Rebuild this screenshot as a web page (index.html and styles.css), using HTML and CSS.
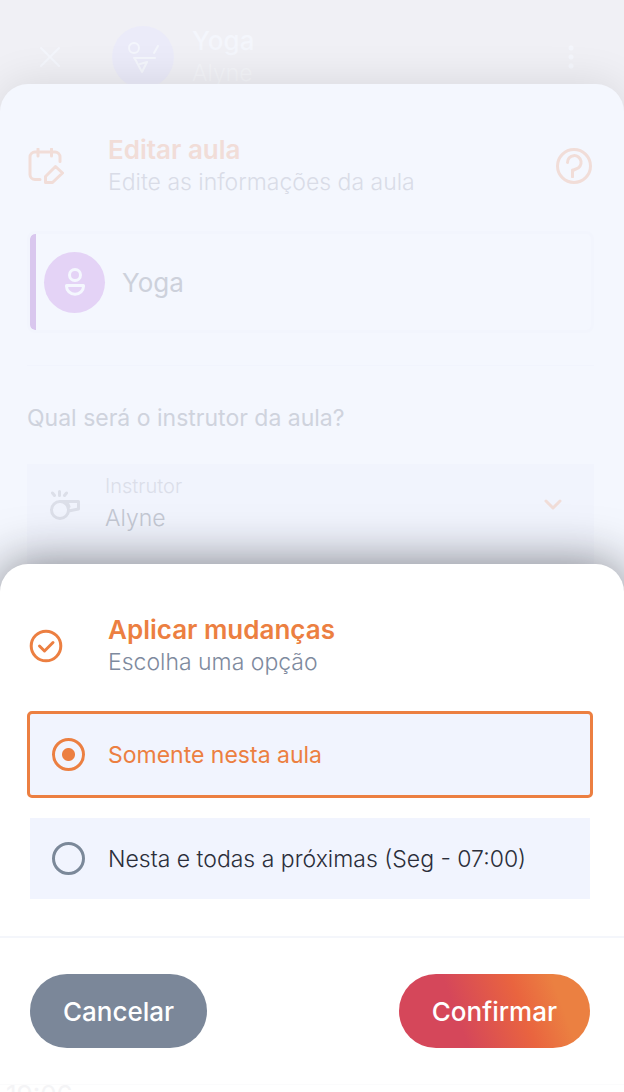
FILE: index.html
```html
<!DOCTYPE html>
<html lang="pt-BR">
<head>
<meta charset="utf-8">
<meta name="viewport" content="width=device-width, initial-scale=1">
<title>Editar aula</title>
<link rel="stylesheet" href="styles.css">
</head>
<body>
<div class="screen">
  <header class="topbar">
    <button class="icon-button" aria-label="Fechar">
      <svg width="20" height="20" viewBox="0 0 20 20"><path d="M1 1l18 18M19 1L1 19"/></svg>
    </button>
    <span class="class-badge">
      <svg width="32" height="32" viewBox="0 0 32 32"><circle cx="7" cy="7" r="5"/><path d="M31 5l-4 7M7 17h21M8 18l7 13 5-10-7 2"/></svg>
    </span>
    <div class="topbar-text">
      <p class="topbar-title">Yoga</p>
      <p class="topbar-subtitle">Alyne</p>
    </div>
    <button class="icon-button dots" aria-label="Mais opções">
      <svg width="8" height="28" viewBox="0 0 8 28"><circle cx="4" cy="5" r="2.500"/><circle cx="4" cy="14" r="2.500"/><circle cx="4" cy="23" r="2.500"/></svg>
    </button>
  </header>

  <main class="sheet editor">
    <div class="sheet-head">
      <svg width="36" height="36" viewBox="0 0 36 36"><path d="M12 31.500H7a5 5 0 0 1-5-5V9a5 5 0 0 1 5-5h20a5 5 0 0 1 5 5v4.500M10 1v7M23.500 1v7M17.500 34.500V28.500l10-10 7 6.500-10 9.500z"/></svg>
      <div class="head-text">
        <h1>Editar aula</h1>
        <p>Edite as informações da aula</p>
      </div>
      <button class="icon-button" aria-label="Ajuda">
        <svg width="36" height="36" viewBox="0 0 36 36"><circle cx="18" cy="18" r="16.500"/><path d="M11.500 14.500a6.800 6.800 0 1 1 8.500 6.500c-2.500.8-3.500 1.200-3.500 3v4.500"/><path d="M16.500 22v6.500"/></svg>
      </button>
    </div>

    <section class="class-card">
      <span class="avatar">
        <svg width="20" height="28" viewBox="0 0 20 28"><circle cx="10" cy="7" r="5.500"/><path d="M1.500 17.500h17v.8a8.500 8 0 0 1-17 0z"/></svg>
      </span>
      <span class="class-name">Yoga</span>
    </section>

    <section class="question">
      <h2>Qual será o instrutor da aula?</h2>
      <div class="field">
        <svg class="whistle" width="30" height="30" viewBox="0 0 30 30"><circle cx="10" cy="20" r="8.500"/><path d="M10 11.500h18.500v7.500l-10 2M17 12l2 4.500M2.500 3l2 2.500M9.500 1.500v4M16.500 3l-2 2.500"/></svg>
        <div class="field-text">
          <label for="instructor">Instrutor</label>
          <select id="instructor"><option>Alyne</option></select>
        </div>
        <svg class="chevron" width="18" height="12" viewBox="0 0 18 12"><path d="M2 2l7 7 7-7"/></svg>
      </div>
    </section>
  </main>

  <form class="sheet dialog" role="dialog" aria-labelledby="dialog-title">
    <div class="sheet-head">
      <svg width="34" height="34" viewBox="0 0 34 34"><circle cx="17" cy="17" r="14.800"/><path d="M10.500 17l5 5 8.500-8.500"/></svg>
      <div class="head-text">
        <h1 id="dialog-title">Aplicar mudanças</h1>
        <p>Escolha uma opção</p>
      </div>
    </div>
    <div class="options">
      <label class="option"><input type="radio" name="scope" checked>Somente nesta aula</label>
      <label class="option"><input type="radio" name="scope">Nesta e todas a próximas (Seg - 07:00)</label>
    </div>
    <div class="actions">
      <button class="pill cancel" type="button">Cancelar</button>
      <button class="pill confirm" type="button">Confirmar</button>
    </div>
    <div class="ghost-row">19:06</div>
  </form>
</div>
</body>
</html>
```
FILE: styles.css
```css
* {
  box-sizing: border-box;
}

body,
h1,
h2,
p {
  margin: 0;
}

body {
  font-family: Inter, "Liberation Sans", sans-serif;
  font-size: 23px;
  line-height: 32px;
}

svg {
  flex: none;
  display: block;
  fill: none;
  stroke: currentColor;
  stroke-width: 3;
  stroke-linecap: round;
  stroke-linejoin: round;
}

button {
  font: inherit;
  border: 0;
}

.icon-button {
  padding: 0;
  background: none;
  color: inherit;
}

.screen {
  position: relative;
  display: flex;
  flex-direction: column;
  height: 100vh;
  min-height: 860px;
  overflow: hidden;
  background: #f0f0f5;
}

/* Faded top bar */
.topbar {
  display: flex;
  align-items: center;
  height: 84px;
  padding: 30px 49px 0 40px;
  color: #f4f6fc;
}

.topbar svg {
  stroke-width: 2;
}

.dots svg {
  fill: currentColor;
  stroke: none;
}

.class-badge {
  display: grid;
  place-items: center;
  width: 62px;
  height: 62px;
  margin: 0 18px 0 52px;
  border-radius: 50%;
  background: #ebebf9;
}

.topbar-text {
  flex: 1;
}

.topbar-title {
  font-size: 26px;
  font-weight: 500;
}

.topbar-subtitle {
  color: #f4f5f9;
  font-weight: 300;
}

/* Sheets */
.sheet {
  border-radius: 28px 28px 0 0;
}

.sheet-head {
  display: flex;
  align-items: center;
  padding: 0 32px 0 28px;
}

.head-text {
  flex: 1;
  margin-left: 44px;
}

.sheet-head h1 {
  font-size: 26px;
  font-weight: 600;
}

.sheet-head p {
  font-weight: 300;
}

.editor {
  position: relative;
  flex: 1;
  padding-top: 50px;
  background: #f4f7fe;
  box-shadow: 0 0 44px rgba(0, 0, 0, 0.11);
}

.editor .sheet-head {
  color: #f1ddd8;
}

.editor .sheet-head p {
  color: #d9dce7;
}

.class-card {
  display: flex;
  align-items: center;
  gap: 17px;
  height: 102px;
  margin: 33px 30px 0 27px;
  padding-left: 8px;
  border: 3px solid #f2f5fd;
  border-radius: 8px;
  background: linear-gradient(to right, #d9c7ee 6px, transparent 6px);
  background-clip: padding-box;
}

.avatar {
  display: grid;
  place-items: center;
  width: 61px;
  height: 61px;
  margin-left: 6px;
  border-radius: 50%;
  background: #e4d3f6;
  color: #f4f7fe;
}

.class-name {
  padding-top: 2px;
  color: #cdd1db;
  font-size: 26px;
}

.question {
  margin: 32px 30px 0 27px;
  border-top: 1px solid #f1f4fd;
  padding-top: 36px;
}

.question h2 {
  color: #cfd3dd;
  font-size: 23px;
  font-weight: 400;
}

.field {
  display: flex;
  align-items: center;
  height: 104px;
  margin-top: 30px;
  padding: 0 32px 22px 23px;
  background: #f1f4fd;
}

.whistle {
  color: #dcdfe9;
}

.field-text {
  display: flex;
  flex: 1;
  flex-direction: column;
  margin: 0 0 6px 25px;
}

.field-text label {
  color: #dbdee9;
  font-size: 20px;
  font-weight: 300;
}

.field-text select {
  appearance: none;
  padding: 0;
  border: 0;
  background: none;
  color: #c4c8d3;
  font: inherit;
  font-weight: 300;
}

.chevron {
  color: #f1ddd8;
}

/* Dialog laid over the editor */
.dialog {
  position: absolute;
  right: 0;
  bottom: 0;
  left: 0;
  padding-top: 50px;
  background: #fff;
  box-shadow: 0 0 50px rgba(20, 22, 28, 0.54);
}

.dialog .sheet-head {
  padding-left: 29px;
  color: #ec7f41;
}

.dialog .head-text {
  margin-left: 45px;
}

.dialog .sheet-head p {
  color: #7e8a9e;
}

.options {
  display: grid;
  gap: 17px;
  padding: 33px 31px 34px 27px;
}

.option {
  display: flex;
  align-items: center;
  gap: 23px;
  height: 87px;
  padding-left: 22px;
  border: 3px solid transparent;
  background: #f1f4fe;
  background-clip: padding-box;
  color: #2b2e3a;
  font-weight: 300;
}

.option:has(:checked) {
  border-color: #ec7f41;
  border-radius: 5px;
  color: #ec7f41;
  font-weight: 400;
}

.option input {
  appearance: none;
  flex: none;
  width: 33px;
  height: 33px;
  margin: 0;
  border: 3px solid #7b8899;
  border-radius: 50%;
}

.option input:checked {
  border-color: #ec7f41;
  background: radial-gradient(circle, #ec7f41 6px, transparent 7px);
}

.actions {
  display: flex;
  justify-content: space-between;
  padding: 36px 34px 36px 30px;
  border-top: 2px solid #f4f6fb;
}

.pill {
  height: 74px;
  padding: 2px 33px 0;
  border-radius: 37px;
  color: #fff;
  font-size: 26px;
  font-weight: 500;
}

.cancel {
  background: #7b8799;
}

.confirm {
  background: linear-gradient(70deg, #d5475a 32%, #e9643f 63%, #eb8041 82%);
}

.ghost-row {
  height: 8px;
  padding-left: 6px;
  overflow: hidden;
  border-top: 1px solid #fbfbfc;
  color: #f4f4f6;
  font-size: 26px;
  line-height: 20px;
}
```
